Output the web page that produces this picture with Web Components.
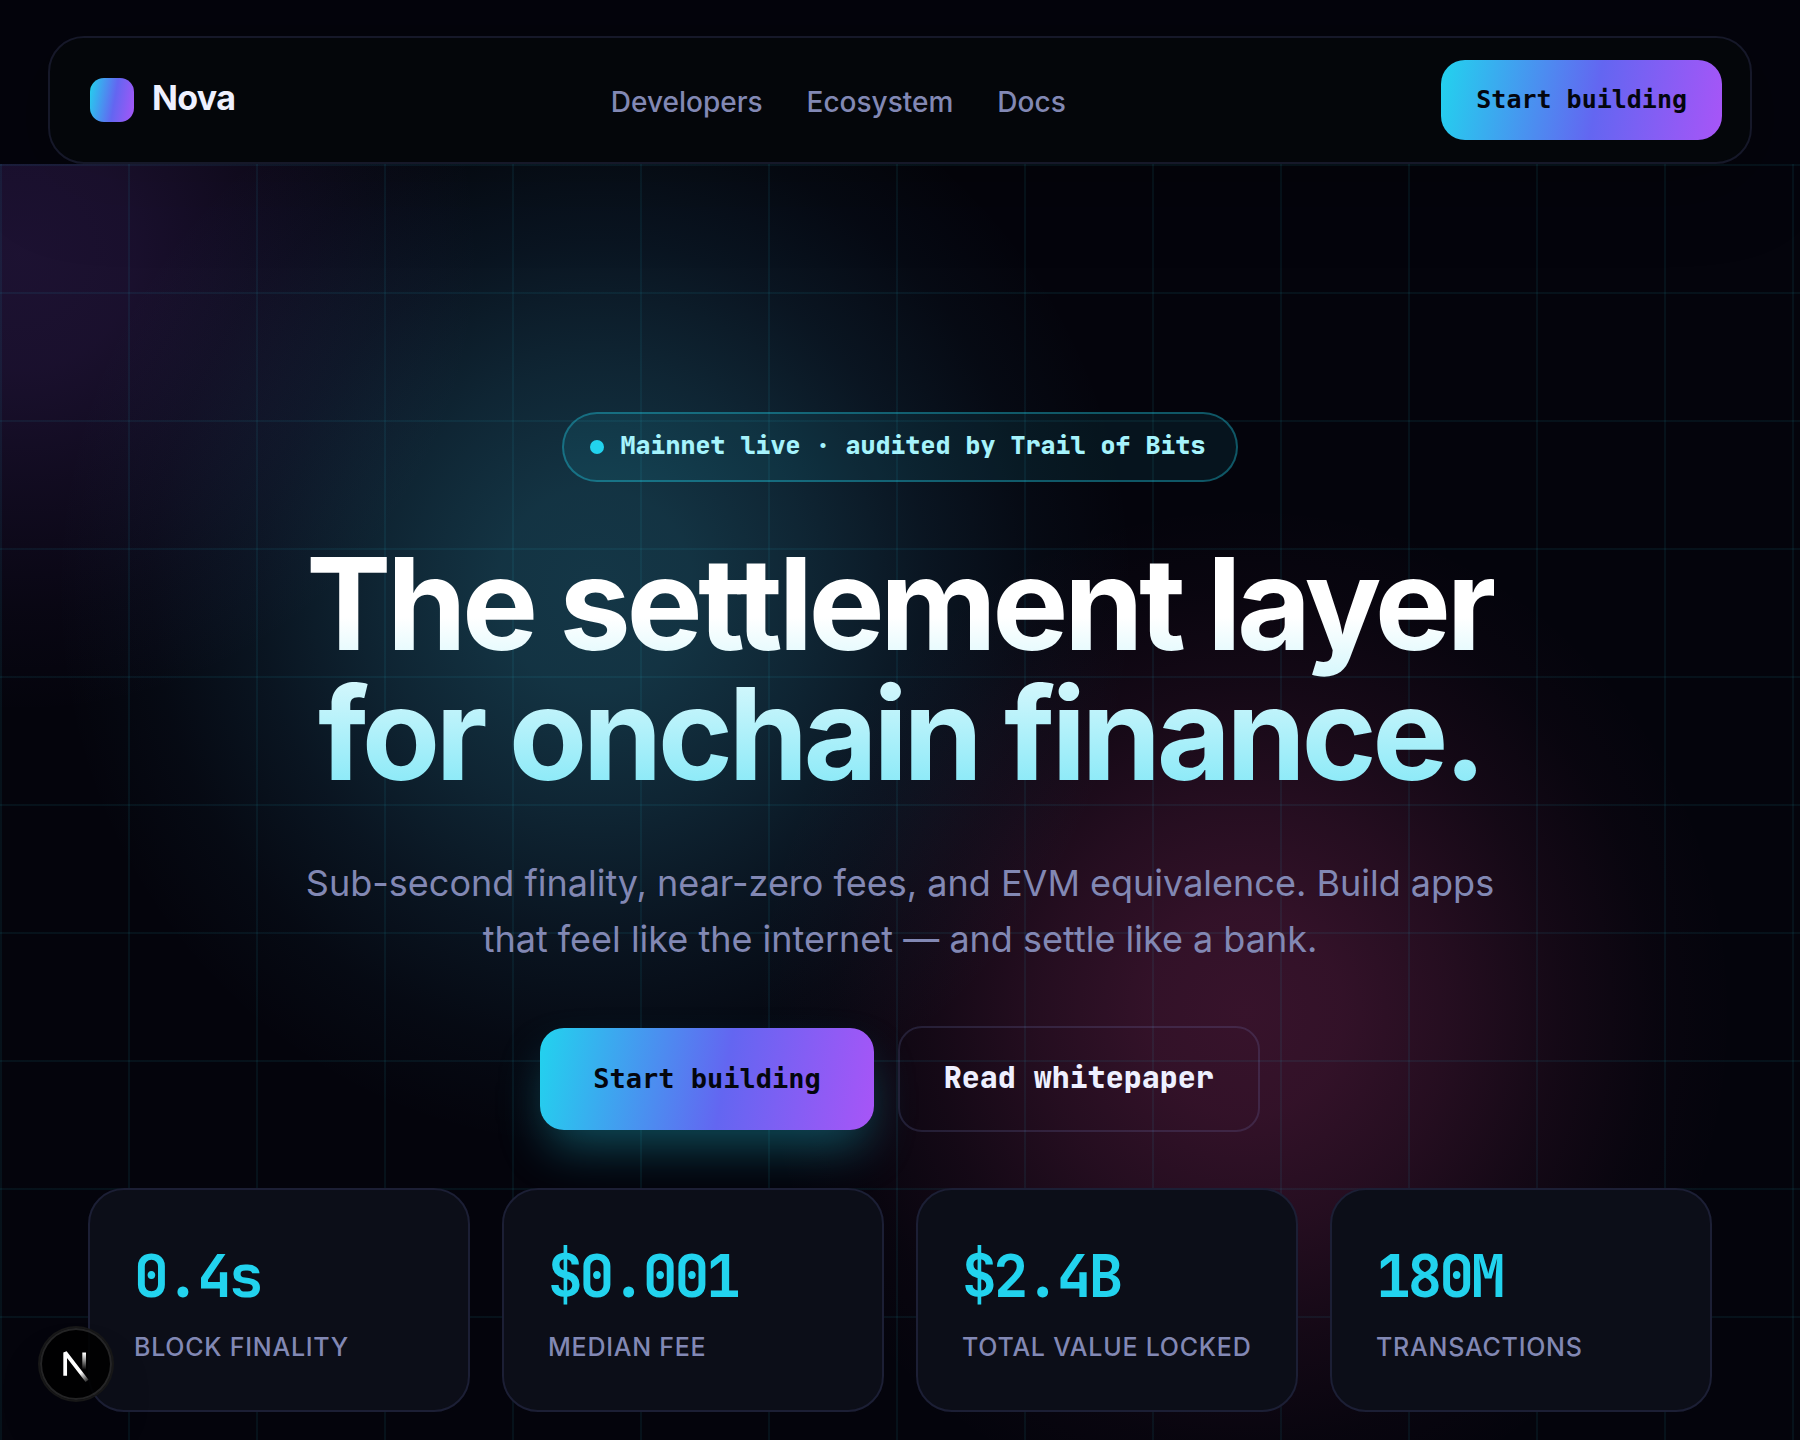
<!DOCTYPE html>
<html lang="en">
<head>
<meta charset="utf-8">
<meta name="viewport" content="width=device-width, initial-scale=1">
<title>Nova</title>
<style>
  :root {
    --bg: #04040c;
    --surface: #0c0e18;
    --line: #1c1f35;
    --text: #eef0ff;
    --muted: #8288b4;
    --cyan: #22d3ee;
    --brand: linear-gradient(100deg, #22d3ee 0%, #6366f1 55%, #a855f7 100%);
    --sans: Inter, "Liberation Sans", sans-serif;
    --mono: "JetBrains Mono", "DejaVu Sans Mono", monospace;
    --mono-ui: Consolas, "DejaVu Sans Mono", monospace;
  }
  body {
    margin: 0;
    min-height: 100vh;
    display: flex;
    flex-direction: column;
    background: var(--bg);
    color: var(--text);
    font-family: var(--sans);
  }
  nova-hero { flex: 1; }
</style>
</head>
<body>
  <nova-nav>
    <nova-logo slot="brand">Nova</nova-logo>
    <a href="#developers">Developers</a>
    <a href="#ecosystem">Ecosystem</a>
    <a href="#docs">Docs</a>
    <nova-button slot="action" size="small">Start building</nova-button>
  </nova-nav>

  <nova-hero>
    <nova-badge slot="badge">Mainnet live · audited by Trail of Bits</nova-badge>
    <span slot="title">The settlement layer<br>for onchain finance.</span>
    <span slot="lead">Sub-second finality, near-zero fees, and EVM equivalence. Build apps that feel like the internet — and settle like a bank.</span>
    <nova-button slot="actions" size="large">Start building</nova-button>
    <nova-button slot="actions" kind="outline">Read whitepaper</nova-button>
    <nova-stat slot="stats" value="0.4s">Block finality</nova-stat>
    <nova-stat slot="stats" value="$0.001">Median fee</nova-stat>
    <nova-stat slot="stats" value="$2.4B">Total value locked</nova-stat>
    <nova-stat slot="stats" value="180M">Transactions</nova-stat>
  </nova-hero>

  <dev-indicator></dev-indicator>

<script>
  const define = (name, html) => {
    const template = document.createElement('template');
    template.innerHTML = html;
    customElements.define(name, class extends HTMLElement {
      constructor() {
        super();
        this.attachShadow({ mode: 'open' }).append(template.content.cloneNode(true));
      }
      connectedCallback() {
        const value = this.shadowRoot.querySelector('[data-value]');
        if (value) value.textContent = this.getAttribute('value');
      }
    });
  };

  define('nova-logo', `
    <style>
      :host { display: flex; align-items: center; gap: 18px; }
      .mark { width: 44px; height: 44px; border-radius: 14px; background: var(--brand); }
      .name { font: 700 34px/40px var(--sans); letter-spacing: -0.02em; padding-bottom: 4px; }
    </style>
    <span class="mark"></span><span class="name"><slot></slot></span>`);

  define('nova-button', `
    <style>
      :host { display: block; }
      button {
        display: block; margin: 0; border: 0; cursor: pointer;
        background: var(--brand); color: #04060e;
        font-family: var(--mono-ui); font-weight: 700; white-space: nowrap;
      }
      :host([size="small"]) button { padding: 24px 35px; border-radius: 24px; font-size: 25px; line-height: 32px; }
      :host([size="large"]) button {
        padding: 32px 53px; border-radius: 24px; font-size: 27px; line-height: 38px;
        box-shadow: 0 24px 48px -8px rgba(34, 211, 238, 0.35);
      }
      :host([kind="outline"]) button {
        padding: 30px 44px 34px; border: 2px solid rgba(130, 136, 210, 0.18); border-radius: 24px;
        background: none; color: var(--text);
        font-family: var(--mono); font-size: 30px; font-weight: 800; line-height: 38px;
      }
    </style>
    <button type="button"><slot></slot></button>`);

  define('nova-nav', `
    <style>
      :host { display: block; padding: 36px 48px 0; }
      nav {
        display: flex; align-items: center; justify-content: space-between;
        padding: 22px 28px 22px 40px;
        border: 2px solid #161829; border-radius: 36px;
        background: #04060a;
        box-shadow: 0 16px 80px rgba(0, 0, 0, 0.35);
      }
      .links { display: flex; gap: 44px; padding-top: 4px; }
      ::slotted(a) { color: var(--muted); text-decoration: none; font: 500 28px/34px var(--sans); }
    </style>
    <nav>
      <slot name="brand"></slot>
      <div class="links"><slot></slot></div>
      <slot name="action"></slot>
    </nav>`);

  define('nova-badge', `
    <style>
      :host {
        display: flex; align-items: center; gap: 16px;
        padding: 16px 30px 16px 26px;
        border: 2px solid rgba(34, 211, 238, 0.35); border-radius: 35px;
        background: rgba(34, 211, 238, 0.08);
        color: #a5f3fc;
        font: 800 25px/34px var(--mono);
      }
      .dot { width: 14px; height: 14px; border-radius: 50%; background: var(--cyan); }
      .text { padding-bottom: 4px; line-height: 30px; }
    </style>
    <span class="dot"></span><span class="text"><slot></slot></span>`);

  define('nova-stat', `
    <style>
      :host {
        display: block; box-sizing: border-box; padding: 49px 44px 45px;
        border: 2px solid var(--line); border-radius: 36px;
        background: var(--surface);
      }
      .value { color: var(--cyan); font: 700 58px/74px var(--mono); letter-spacing: -0.055em; }
      .label {
        margin-top: 16px; color: var(--muted); white-space: nowrap;
        font: 500 25px/36px var(--sans); letter-spacing: 0.03em; text-transform: uppercase;
      }
    </style>
    <div class="value" data-value></div>
    <div class="label"><slot></slot></div>`);

  define('nova-hero', `
    <style>
      :host {
        display: block;
        background:
          linear-gradient(rgba(34, 211, 238, 0.065) 2px, transparent 2px) 0 0 / 128px 128px,
          linear-gradient(90deg, rgba(34, 211, 238, 0.065) 2px, transparent 2px) 0 0 / 128px 128px,
          radial-gradient(540px 560px at 595px 425px,
            rgba(68, 205, 245, 0.25) 0%, rgba(68, 205, 245, 0.235) 18%, rgba(68, 200, 245, 0.17) 40%,
            rgba(68, 190, 245, 0.09) 62%, rgba(68, 190, 245, 0.03) 82%, transparent 100%),
          radial-gradient(490px 510px at 1245px 850px,
            rgba(236, 72, 153, 0.22) 0%, rgba(236, 72, 153, 0.20) 20%, rgba(236, 72, 153, 0.14) 42%,
            rgba(236, 72, 153, 0.07) 64%, rgba(236, 72, 153, 0.02) 84%, transparent 100%),
          radial-gradient(460px 460px at 20px 90px,
            rgba(150, 85, 235, 0.17) 0%, rgba(150, 85, 235, 0.15) 25%, rgba(150, 85, 235, 0.09) 50%,
            rgba(150, 85, 235, 0.03) 78%, transparent 100%);
      }
      section { display: flex; flex-direction: column; align-items: center; padding: 248px 88px 28px; }
      h1 {
        margin: 57px 0 0; text-align: center;
        font: 700 128px/130px var(--sans); letter-spacing: -0.036em;
        background: linear-gradient(180deg, #fff 30%, #82e8f7 100%);
        -webkit-background-clip: text; background-clip: text; color: transparent;
      }
      p {
        margin: 56px 0 0; max-width: 1240px; text-align: center;
        color: var(--muted); font: 400 36px/56px var(--sans);
      }
      .actions { display: flex; align-items: center; gap: 24px; margin-top: 59px; }
      .stats {
        align-self: stretch; margin-top: 56px;
        display: grid; grid-template-columns: repeat(4, minmax(0, 1fr)); gap: 32px;
      }
    </style>
    <section>
      <slot name="badge"></slot>
      <h1><slot name="title"></slot></h1>
      <p><slot name="lead"></slot></p>
      <div class="actions"><slot name="actions"></slot></div>
      <div class="stats"><slot name="stats"></slot></div>
    </section>`);

  define('dev-indicator', `
    <style>
      :host { position: fixed; left: 40px; bottom: 40px; }
      button {
        display: block; width: 72px; height: 72px; padding: 0; border: 0; border-radius: 50%;
        background: rgba(0, 0, 0, 0.9); cursor: pointer;
        box-shadow: 0 0 0 2px #171717, inset 0 0 0 2px rgba(255, 255, 255, 0.14), 0 32px 64px -16px rgba(0, 0, 0, 0.24);
      }
      svg { display: block; }
    </style>
    <button type="button" aria-label="Open dev tools">
      <svg width="72" height="72" viewBox="0 0 72 72" fill="none" aria-hidden="true">
        <defs>
          <linearGradient id="diagonal" x1="9.96" y1="11.12" x2="13.6" y2="15.8" gradientUnits="userSpaceOnUse">
            <stop stop-color="#fff"/><stop offset="1" stop-color="#fff" stop-opacity="0.1"/>
          </linearGradient>
          <linearGradient id="stem" x1="11.82" y1="1.4" x2="11.79" y2="9.63" gradientUnits="userSpaceOnUse">
            <stop stop-color="#fff"/><stop offset="1" stop-color="#fff" stop-opacity="0"/>
          </linearGradient>
        </defs>
        <g transform="translate(20.5 22.5) scale(2)" stroke-width="1.86">
          <path d="M13.3 15.2 L2.34 1 V12.6" stroke="url(#diagonal)" stroke-linejoin="bevel"/>
          <path d="M11.825 1 V13.1" stroke="url(#stem)"/>
        </g>
      </svg>
    </button>`);
</script>
</body>
</html>
